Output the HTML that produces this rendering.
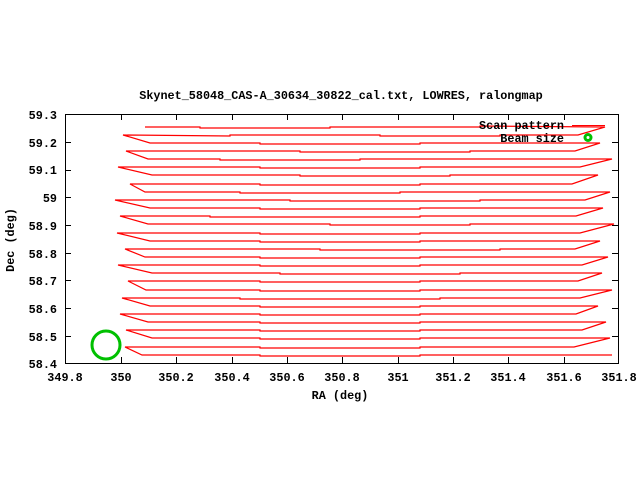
<!DOCTYPE html>
<html><head><meta charset="utf-8"><style>
html,body{margin:0;padding:0;background:#fff;width:640px;height:480px;overflow:hidden}
svg text{font-family:"Liberation Mono",monospace;font-weight:bold;font-size:11.8px;fill:#000}
</style></head><body>
<svg width="640" height="480" viewBox="0 0 640 480" xmlns="http://www.w3.org/2000/svg">
<rect width="640" height="480" fill="#fff"/>
<text x="341" y="99" text-anchor="middle">Skynet_58048_CAS-A_30634_30822_cal.txt, LOWRES, ralongmap</text>
<g stroke="#000" stroke-width="1" fill="none" shape-rendering="crispEdges">
<rect x="65.5" y="114.5" width="553" height="249"/>
<path d="M121.5 114v6M121.5 363v-6M176.5 114v6M176.5 363v-6M232.5 114v6M232.5 363v-6M287.5 114v6M287.5 363v-6M342.5 114v6M342.5 363v-6M398.5 114v6M398.5 363v-6M453.5 114v6M453.5 363v-6M508.5 114v6M508.5 363v-6M564.5 114v6M564.5 363v-6
M65 142.5h6M618 142.5h-6M65 170.5h6M618 170.5h-6M65 197.5h6M618 197.5h-6M65 225.5h6M618 225.5h-6M65 253.5h6M618 253.5h-6M65 280.5h6M618 280.5h-6M65 308.5h6M618 308.5h-6M65 336.5h6M618 336.5h-6"/>
</g>
<g text-anchor="end">
<text x="57" y="119">59.3</text><text x="57" y="147">59.2</text><text x="57" y="174">59.1</text><text x="57" y="202">59</text><text x="57" y="230">58.9</text><text x="57" y="258">58.8</text><text x="57" y="285">58.7</text><text x="57" y="313">58.6</text><text x="57" y="341">58.5</text><text x="57" y="368">58.4</text>
</g>
<g text-anchor="middle">
<text x="65" y="381">349.8</text><text x="121" y="381">350</text><text x="176" y="381">350.2</text><text x="232" y="381">350.4</text><text x="287" y="381">350.6</text><text x="342" y="381">350.8</text><text x="398" y="381">351</text><text x="453" y="381">351.2</text><text x="508" y="381">351.4</text><text x="564" y="381">351.6</text><text x="619" y="381">351.8</text>
<text x="340" y="399">RA (deg)</text>
</g>
<text transform="translate(14,240) rotate(-90)" text-anchor="middle">Dec (deg)</text>
<polyline fill="none" stroke="#f00" stroke-width="1.2" points="
145,127 200,127 200,128 330,128 330,127 480,127 480,126 605,127
578,135 500,135 500,136 380,136 380,135 230,135 230,136 123,135
150,143 260,143 260,144 420,144 420,143 600,143
575,151 470,151 470,152 300,152 300,151 126,151
148,159 220,159 220,160 360,160 360,159 612,159
580,167 420,167 420,168 260,168 260,167 118,167
152,175 300,175 300,176 450,176 450,175 598,175
572,184 420,184 420,185 260,185 260,184 130,184
145,192 240,192 240,193 400,193 400,192 610,192
585,200 480,200 480,201 290,201 290,200 115,200
150,208 260,208 260,209 420,209 420,208 603,208
576,216 420,216 420,217 210,217 210,216 120,216
148,224 330,224 330,225 470,225 470,224 614,224
580,233 420,233 420,234 260,234 260,233 117,233
150,241 260,241 260,242 420,242 420,241 600,241
575,249 500,249 500,250 320,250 320,249 125,249
145,257 260,257 260,258 420,258 420,257 608,257
582,265 420,265 420,266 260,266 260,265 118,265
152,273 280,273 280,274 460,274 460,273 602,273
578,281 420,281 420,282 260,282 260,281 128,281
146,290 260,290 260,291 420,291 420,290 612,290
580,298 440,298 440,299 240,299 240,298 122,298
150,306 260,306 260,307 420,307 420,306 598,306
576,314 420,314 420,315 260,315 260,314 120,314
148,322 260,322 260,323 420,323 420,322 606,322
582,330 420,330 420,331 260,331 260,330 126,330
152,338 260,338 260,339 420,339 420,338 610,338
574,347 420,347 420,348 260,348 260,347 125,347
142,355 260,355 260,356 420,356 420,355 612,355"/>
<circle cx="106" cy="345" r="14" fill="none" stroke="#00c000" stroke-width="3"/>
<text x="564" y="129" text-anchor="end">Scan pattern</text>
<line x1="572" y1="125.5" x2="605" y2="125.5" stroke="#f00" stroke-width="1"/>
<text x="564" y="142" text-anchor="end">Beam size</text>
<circle cx="588" cy="137.5" r="3" fill="none" stroke="#00c000" stroke-width="3"/>
</svg>
</body></html>
